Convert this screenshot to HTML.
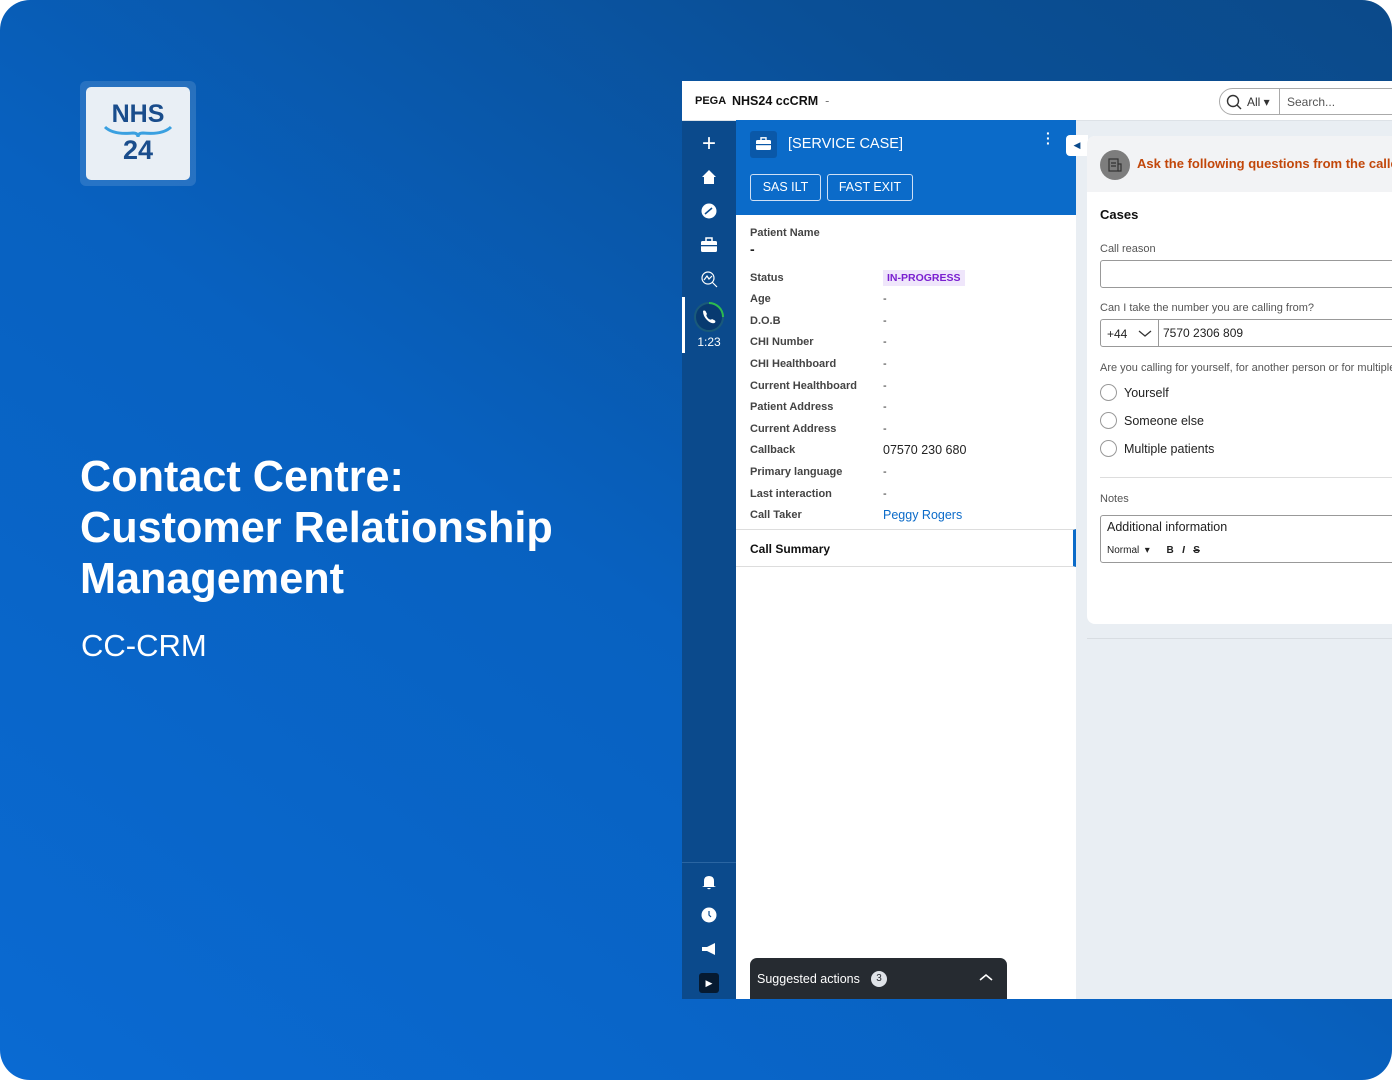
<!DOCTYPE html>
<html><head><meta charset="utf-8"><style>
*{margin:0;padding:0;box-sizing:border-box}
html,body{width:1392px;height:1080px;background:#fff;overflow:hidden}
body{font-family:"Liberation Sans",sans-serif}
.bg{position:absolute;left:0;top:0;width:1392px;height:1080px;border-radius:30px;background:linear-gradient(35deg,#0a6ad2 0%,#0861c0 45%,#0a4f96 80%,#0b4a8a 100%);overflow:hidden}
.logoO{position:absolute;left:80px;top:81px;width:116px;height:105px;border-radius:6px;background:rgba(255,255,255,.13)}
.logo{position:absolute;left:86px;top:87px;width:104px;height:93px;border-radius:5px;background:#e9eff5;text-align:center;color:#1a4d8c;font-weight:bold}
.h1{position:absolute;left:80px;top:452px;color:#fff;font-weight:bold;font-size:43.2px;line-height:51px}
.sub{position:absolute;left:81px;top:628px;color:#fff;font-size:31px}
.app{position:absolute;left:682px;top:81px;width:710px;height:918px;background:#e9eef3;overflow:hidden}
.top{position:absolute;left:0;top:0;width:710px;height:40px;background:#fff;border-bottom:1px solid #dde2e7}
.nav{position:absolute;left:0;top:40px;width:54px;height:878px;background:#0b4a8c}
.nav>div{position:absolute;left:0;width:54px;text-align:center;color:#fff}
.case{position:absolute;left:54px;top:39px;width:340px;height:879px;background:#fff}
.chead{height:95px;background:#0b6bc9;position:relative}
.btn{position:absolute;top:54px;height:27px;border:1px solid #cfe0f5;border-radius:3px;color:#fff;font-size:12.5px;line-height:25px;text-align:center}
.row{position:absolute;left:14px;font-size:11px;color:#444;font-weight:bold}
.row span{position:absolute;left:133px;white-space:nowrap;font-weight:normal;color:#222}
.lbl{font-size:11px;color:#555;position:absolute;left:13px}
.card{position:absolute;left:405px;top:55px;width:320px;height:488px;background:#fff;border-radius:8px;overflow:hidden}
.radio{position:absolute;left:13px;width:17px;height:17px;border:1px solid #999;border-radius:50%}
.rt{position:absolute;left:37px;font-size:12.5px;color:#222}
</style></head><body>
<div class="bg">
<div class="logoO"></div>
<div class="logo"><div style="font-size:25px;margin-top:14px;line-height:26px">NHS</div>
<svg width="70" height="14" style="display:block;margin:-2px auto 0" viewBox="0 0 70 14"><path d="M2 2 Q10 10 30 8 Q35 8 35 12 Q35 8 40 8 Q60 10 68 2" fill="none" stroke="#3aa0e0" stroke-width="3"/></svg>
<div style="font-size:27px;line-height:26px;margin-top:-2px">24</div></div>
<div class="h1">Contact Centre:<br>Customer Relationship<br>Management</div>
<div class="sub">CC-CRM</div>

<div class="app">
<div class="top">
<div style="position:absolute;left:13px;top:14px;font-size:11px;font-weight:bold;color:#111">PEGA</div>
<div style="position:absolute;left:50px;top:13px;font-size:12.5px;font-weight:bold;color:#111">NHS24 ccCRM <span style="color:#777;font-weight:normal">&nbsp;-</span></div>
<div style="position:absolute;left:537px;top:7px;width:200px;height:27px;border:1px solid #aaa;border-radius:14px 0 0 14px;font-size:12px;color:#333">
<svg style="position:absolute;left:6px;top:5px" width="16" height="16" viewBox="0 0 16 16"><circle cx="7" cy="7" r="5.5" fill="none" stroke="#333" stroke-width="1.4"/><path d="M11 11 L15 15" stroke="#333" stroke-width="1.4"/></svg>
<span style="position:absolute;left:27px;top:6px">All ▾</span>
<div style="position:absolute;left:59px;top:0;height:25px;border-left:1px solid #aaa;padding:6px 7px;color:#555">Search...</div></div>
</div>
<div class="nav">
<div style="top:9px;font-size:24px;font-weight:200">+</div>
<div style="top:48px"><svg width="16" height="16" viewBox="0 0 16 16"><path d="M1 8 L8 1 L15 8 L13 8 L13 15 L3 15 L3 8Z" fill="#fff"/></svg></div>
<div style="top:82px"><svg width="16" height="16"><circle cx="8" cy="8" r="7.5" fill="#fff"/><path d="M4 11 L11 5" stroke="#0b4a8c" stroke-width="1.5"/></svg></div>
<div style="top:116px"><svg width="16" height="16"><rect x="0" y="4" width="16" height="11" rx="1.5" fill="#fff"/><rect x="5" y="1" width="6" height="4" fill="none" stroke="#fff" stroke-width="1.5"/><rect x="0" y="8" width="16" height="1.3" fill="#0b4a8c"/></svg></div>
<div style="top:150px"><svg width="17" height="17"><circle cx="7" cy="7" r="6" fill="none" stroke="#fff" stroke-width="1.2"/><path d="M3 9 L6 5 L8 8 L11 5 M11 11 L16 16" stroke="#fff" stroke-width="1.2" fill="none"/></svg></div>
<div style="top:176px;left:0;width:3px;height:56px;background:#fff"></div>
<div style="top:180px"><svg width="32" height="32"><circle cx="16" cy="16" r="14" fill="#083a70" stroke="#1a5a7a" stroke-width="2"/><path d="M16 2 A14 14 0 0 1 30 16" stroke="#2dbb4f" stroke-width="2" fill="none"/><path d="M10 10 Q11 9 12.5 10 L14 13 Q13 14 13.5 15 Q15 18 17 18.5 Q18 19 19 18 L22 19.5 Q23 21 21.5 22 Q18 23 14 19 Q10 15 10 10Z" fill="#fff"/></svg></div>
<div style="top:214px;font-size:12px">1:23</div>
<div style="top:741px;height:1px;background:#2a65a2"></div>
<div style="top:753px"><svg width="16" height="16"><path d="M3 12 L3 7 Q3 2 8 2 Q13 2 13 7 L13 12 L15 13 L1 13Z M6 14 L10 14 Q8 16.5 6 14Z" fill="#fff"/></svg></div>
<div style="top:786px"><svg width="16" height="16"><circle cx="8" cy="8" r="7.5" fill="#fff"/><path d="M8 4 L8 8 L10 10" stroke="#0b4a8c" stroke-width="1.2" fill="none"/></svg></div>
<div style="top:820px"><svg width="16" height="16"><path d="M1 6 L6 6 L14 2 L14 14 L6 10 L1 10Z" fill="#fff"/></svg></div>
<div style="top:852px;left:17px;width:20px;height:20px;background:#061a30;border-radius:3px;font-size:9px;line-height:20px">▶</div>
</div>
<div class="case">
<div class="chead">
<div style="position:absolute;left:14px;top:11px;width:27px;height:27px;background:#0a58a8;border-radius:3px"><svg style="margin:6px 0 0 6px" width="15" height="14"><rect x="0" y="3" width="15" height="10" rx="1.5" fill="#fff"/><rect x="5" y="0.8" width="5" height="3" fill="none" stroke="#fff" stroke-width="1.4"/><rect x="0" y="7" width="15" height="1.2" fill="#0a58a8"/></svg></div>
<div style="position:absolute;left:52px;top:16px;color:#fff;font-size:14.5px">[SERVICE CASE]</div>
<div style="position:absolute;left:310px;top:11px;color:#fff;font-size:14px;font-weight:bold;line-height:5px">·<br>·<br>·</div>
<div class="btn" style="left:14px;width:71px">SAS ILT</div>
<div class="btn" style="left:91px;width:86px">FAST EXIT</div>
</div>
<div class="row" style="top:107px">Patient Name</div>
<div class="row" style="top:121px;font-size:14px;color:#222">-</div>
<div class="row" style="top:152px">Status<span style="left:133px;top:-2px;background:#efe6fb;color:#7a1fd0;font-weight:bold;font-size:10.5px;padding:2px 4px">IN-PROGRESS</span></div>
<div class="row" style="top:173px">Age<span>-</span></div>
<div class="row" style="top:195px">D.O.B<span>-</span></div>
<div class="row" style="top:216px">CHI Number<span>-</span></div>
<div class="row" style="top:238px">CHI Healthboard<span>-</span></div>
<div class="row" style="top:260px">Current Healthboard<span>-</span></div>
<div class="row" style="top:281px">Patient Address<span>-</span></div>
<div class="row" style="top:303px">Current Address<span>-</span></div>
<div class="row" style="top:324px">Callback<span style="font-size:12.5px;top:-1px">07570 230 680</span></div>
<div class="row" style="top:346px">Primary language<span>-</span></div>
<div class="row" style="top:368px">Last interaction<span>-</span></div>
<div class="row" style="top:389px">Call Taker<span style="color:#0b6bc9;font-size:12.5px;top:-1px">Peggy Rogers</span></div>
<div style="position:absolute;left:0;top:409px;width:340px;height:38px;border-top:1px solid #ddd;border-bottom:1px solid #ddd;border-right:3px solid #0b6bc9"><div style="position:absolute;left:14px;top:12px;font-size:12px;font-weight:bold;color:#111">Call Summary</div></div>
<div style="position:absolute;left:14px;top:838px;width:257px;height:42px;background:#262b31;border-radius:7px 7px 0 0;color:#fff;font-size:12.5px">
<span style="position:absolute;left:7px;top:14px">Suggested actions</span>
<span style="position:absolute;left:121px;top:13px;width:16px;height:16px;border-radius:50%;background:#dfe3e8;color:#262b31;font-size:10px;text-align:center;line-height:16px">3</span>
<svg style="position:absolute;left:229px;top:15px" width="14" height="10"><path d="M1 7 L7 2 L13 7" stroke="#fff" stroke-width="1.6" fill="none"/></svg></div>
</div>
<div style="position:absolute;left:384px;top:54px;width:22px;height:21px;background:#fff;border-radius:4px 0 0 4px;color:#0b4a8c;font-size:9px;line-height:21px;text-align:center">◀</div>
<div class="card">
<div style="height:56px;background:#f2f3f5;position:relative">
<div style="position:absolute;left:13px;top:14px;width:30px;height:30px;border-radius:50%;background:#7d7d7d"><svg style="margin:8px" width="14" height="14"><rect x="1" y="1" width="9" height="12" fill="none" stroke="#333" stroke-width="1.2"/><path d="M3 5 H8 M3 8 H8 M10 6 H13 V13 H10" stroke="#333" stroke-width="1.2" fill="none"/></svg></div>
<div style="position:absolute;left:50px;top:20px;color:#c2470a;font-weight:bold;font-size:13px;white-space:nowrap">Ask the following questions from the caller</div></div>
<div style="position:absolute;left:13px;top:71px;font-size:13px;font-weight:bold;color:#111">Cases</div>
<div class="lbl" style="top:107px">Call reason</div>
<div style="position:absolute;left:13px;top:124px;width:320px;height:28px;border:1px solid #999;border-radius:3px"></div>
<div class="lbl" style="top:166px">Can I take the number you are calling from?</div>
<div style="position:absolute;left:13px;top:183px;width:320px;height:28px;border:1px solid #999;border-radius:3px;font-size:12px;color:#222">
<span style="position:absolute;left:6px;top:7px">+44</span><svg style="position:absolute;left:37px;top:9px" width="14" height="9"><path d="M1 2 L7 7 L13 2" stroke="#333" stroke-width="1.3" fill="none"/></svg>
<div style="position:absolute;left:57px;top:0;height:26px;border-left:1px solid #999;padding:6px 4px;white-space:nowrap">7570 2306 809</div></div>
<div class="lbl" style="top:226px;white-space:nowrap">Are you calling for yourself, for another person or for multiple</div>
<div class="radio" style="top:248px"></div><div class="rt" style="top:250px">Yourself</div>
<div class="radio" style="top:276px"></div><div class="rt" style="top:278px">Someone else</div>
<div class="radio" style="top:304px"></div><div class="rt" style="top:306px">Multiple patients</div>
<div style="position:absolute;left:13px;top:341px;width:310px;height:1px;background:#ddd"></div>
<div class="lbl" style="top:357px">Notes</div>
<div style="position:absolute;left:13px;top:379px;width:320px;height:48px;border:1px solid #999;border-radius:3px;color:#222">
<span style="position:absolute;left:6px;top:4px;font-size:12.5px">Additional information</span>
<span style="position:absolute;left:6px;top:29px;font-size:10px">Normal &nbsp;▾ &nbsp; &nbsp; &nbsp;<b>B</b> &nbsp; <i><b>I</b></i> &nbsp; <s><b>S</b></s></span></div>
</div>
<div style="position:absolute;left:405px;top:557px;width:305px;height:1px;background:#d8dde2"></div>
</div>
</div>
</body></html>
